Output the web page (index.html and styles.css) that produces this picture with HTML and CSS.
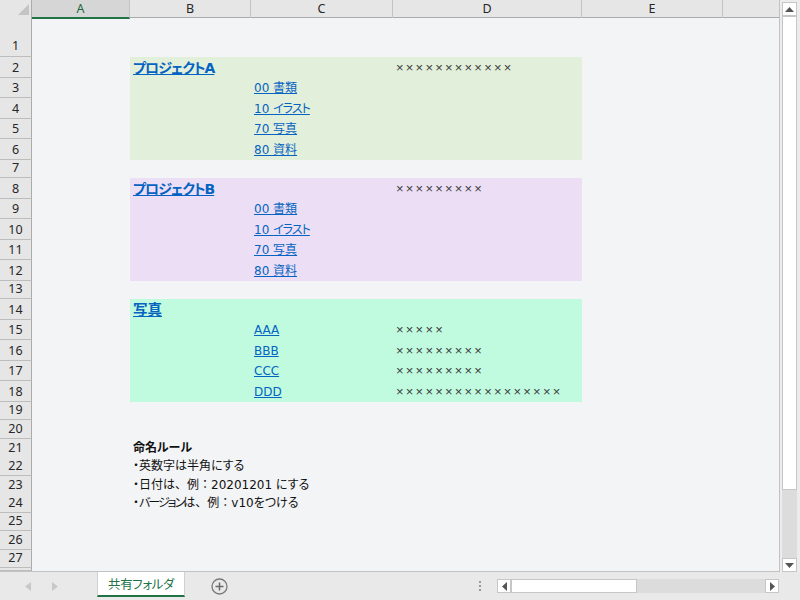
FILE: index.html
```html
<!DOCTYPE html>
<html lang="ja">
<head>
<meta charset="utf-8">
<link rel="stylesheet" href="styles.css">
</head>
<body>
<div class="app">
  <div class="main">
    <div class="sheet">
      <div class="row colhdr">
        <div class="corner"><svg width="32" height="18" viewBox="0 0 32 18"><polygon points="29,4 29,15 18,15" fill="#c4c4c4"/></svg></div>
        <div class="ch sel">A</div><div class="ch">B</div><div class="ch">C</div><div class="ch">D</div><div class="ch">E</div><div class="ch last"></div>
      </div>
      <div class="row r1"><div class="rh">1</div></div>

      <div class="row dr green"><div class="rh">2</div><div class="a"></div><div class="b"><a class="h kana">プロジェクトA</a></div><div class="c"></div><div class="d x">××××××××××××</div></div>
      <div class="row dr green"><div class="rh">3</div><div class="a"></div><div class="b"></div><div class="c"><a class="l">00 書類</a></div><div class="d"></div></div>
      <div class="row dr green"><div class="rh">4</div><div class="a"></div><div class="b"></div><div class="c"><a class="l">10 <span class="nk">イラスト</span></a></div><div class="d"></div></div>
      <div class="row dr green"><div class="rh">5</div><div class="a"></div><div class="b"></div><div class="c"><a class="l">70 写真</a></div><div class="d"></div></div>
      <div class="row dr green"><div class="rh">6</div><div class="a"></div><div class="b"></div><div class="c"><a class="l">80 資料</a></div><div class="d"></div></div>
      <div class="row sr"><div class="rh">7</div></div>

      <div class="row dr purple"><div class="rh">8</div><div class="a"></div><div class="b"><a class="h kana">プロジェクトB</a></div><div class="c"></div><div class="d x">×××××××××</div></div>
      <div class="row dr purple"><div class="rh">9</div><div class="a"></div><div class="b"></div><div class="c"><a class="l">00 書類</a></div><div class="d"></div></div>
      <div class="row dr purple"><div class="rh">10</div><div class="a"></div><div class="b"></div><div class="c"><a class="l">10 <span class="nk">イラスト</span></a></div><div class="d"></div></div>
      <div class="row dr purple"><div class="rh">11</div><div class="a"></div><div class="b"></div><div class="c"><a class="l">70 写真</a></div><div class="d"></div></div>
      <div class="row dr purple"><div class="rh">12</div><div class="a"></div><div class="b"></div><div class="c"><a class="l">80 資料</a></div><div class="d"></div></div>
      <div class="row sr"><div class="rh">13</div></div>

      <div class="row dr mint"><div class="rh">14</div><div class="a"></div><div class="b"><a class="h">写真</a></div><div class="c"></div><div class="d"></div></div>
      <div class="row dr mint"><div class="rh">15</div><div class="a"></div><div class="b"></div><div class="c"><a class="l">AAA</a></div><div class="d x">×××××</div></div>
      <div class="row dr mint"><div class="rh">16</div><div class="a"></div><div class="b"></div><div class="c"><a class="l">BBB</a></div><div class="d x">×××××××××</div></div>
      <div class="row dr mint"><div class="rh">17</div><div class="a"></div><div class="b"></div><div class="c"><a class="l">CCC</a></div><div class="d x">×××××××××</div></div>
      <div class="row dr mint"><div class="rh">18</div><div class="a"></div><div class="b"></div><div class="c"><a class="l">DDD</a></div><div class="d x">×××××××××××××××××</div></div>

      <div class="row sr"><div class="rh">19</div></div>
      <div class="row sr"><div class="rh">20</div></div>
      <div class="row sr"><div class="rh">21</div><div class="a"></div><div class="b bold">命名ルール</div></div>
      <div class="row sr"><div class="rh">22</div><div class="a"></div><div class="b">・英数字は半角にする</div></div>
      <div class="row sr"><div class="rh">23</div><div class="a"></div><div class="b">・日付は<span class="fw">、</span>例<span class="fw">：</span>20201201 にする</div></div>
      <div class="row sr"><div class="rh">24</div><div class="a"></div><div class="b">・<span class="nk2">バージョン</span>は<span class="fw">、</span>例<span class="fw">：</span>v10をつける</div></div>
      <div class="row sr"><div class="rh">25</div></div>
      <div class="row sr"><div class="rh">26</div></div>
      <div class="row sr"><div class="rh">27</div></div>
      <div class="row tail"><div class="rh"></div></div>
    </div>
    <div class="vscroll">
      <div class="sbtn"><svg width="9" height="5" viewBox="0 0 9 5"><polygon points="0,5 9,5 4.5,0" fill="#555"/></svg></div>
      <div class="vthumb"></div>
      <div class="vtrack"></div>
      <div class="sbtn"><svg width="9" height="5" viewBox="0 0 9 5"><polygon points="0,0 9,0 4.5,5" fill="#555"/></svg></div>
    </div>
  </div>
  <div class="tabbar">
    <div class="nav">
      <svg width="6" height="9" viewBox="0 0 6 9"><polygon points="6,0 6,9 0,4.5" fill="#c8c8c8"/></svg>
      <svg width="6" height="9" viewBox="0 0 6 9"><polygon points="0,0 0,9 6,4.5" fill="#c8c8c8"/></svg>
    </div>
    <div class="tab">共有フォルダ</div>
    <div class="add"><svg width="17" height="17" viewBox="0 0 17 17"><circle cx="8.5" cy="8.5" r="7.5" fill="none" stroke="#7a7a7a" stroke-width="1.3"/><path d="M8.5 4.5v8M4.5 8.5h8" stroke="#6a6a6a" stroke-width="1.5"/></svg></div>
    <div class="spacer"></div>
    <div class="dots"><span></span><span></span><span></span></div>
    <div class="hscroll">
      <div class="hbtn"><svg width="5" height="9" viewBox="0 0 5 9"><polygon points="5,0 5,9 0,4.5" fill="#555"/></svg></div>
      <div class="hthumb"></div>
      <div class="htrack"></div>
      <div class="hbtn"><svg width="5" height="9" viewBox="0 0 5 9"><polygon points="0,0 0,9 5,4.5" fill="#555"/></svg></div>
    </div>
  </div>
</div>
</body>
</html>
```

FILE: styles.css
```css
* { box-sizing: border-box; }
html, body { margin: 0; padding: 0; }
body {
  width: 800px; height: 600px; overflow: hidden;
  font-family: "DejaVu Sans", "Noto Sans CJK JP", sans-serif;
  font-feature-settings: "palt";
}
.app { width: 800px; height: 600px; display: flex; flex-direction: column; background: #ececec; }
.main { height: 572px; display: flex; }
.sheet {
  width: 780px; height: 572px; background: #f3f4f6;
  border-right: 1px solid #c2c2c2; border-bottom: 1px solid #c2c2c2;
  display: flex; flex-direction: column; overflow: hidden;
}
.row {
  display: grid;
  grid-template-columns: 32px 98px 121px 142px 189px 141px 1fr;
  flex: none;
}
.colhdr { height: 18px; background: #e6e6e6; border-bottom: 1px solid #ababab; }
.corner { background: #e6e6e6; border-right: 1px solid #ababab; }
.corner svg { display: block; }
.ch {
  font-family: "Noto Sans", sans-serif; font-size: 12.5px; color: #262626;
  display: flex; align-items: center; justify-content: center;
  border-right: 1px solid #c4c4c4; line-height: 16px;
  font-feature-settings: normal;
}
.ch.sel { background: #d6d6d6; color: #1d6b40; border-bottom: 2px solid #217346; margin-bottom: -1px; }
.ch.last { border-right: none; }
.r1 { height: 39px; }
.dr { height: 20.5px; }
.sr { height: 18.5px; }
.tail { flex: 1; }
.rh {
  background: #e6e6e6; border-right: 1px solid #ababab; border-bottom: 1px solid #bdbdbd;
  font-family: "Noto Sans", sans-serif; font-size: 12.5px; color: #262626;
  display: flex; align-items: flex-end; justify-content: center;
  line-height: 16px; padding-bottom: 1px;
  font-feature-settings: normal;
}
.r1 .rh { padding-bottom: 2px; }
.a, .b, .c, .d {
  display: flex; align-items: flex-end; padding: 0 3px 1px;
  white-space: nowrap; font-size: 12px; line-height: 18px; color: #111;
}
.fw { font-feature-settings: normal; }
.nk { letter-spacing: -1px; }
.nk2 { letter-spacing: -2px; }
.green .b, .green .c, .green .d { background: #e2efda; }
.purple .b, .purple .c, .purple .d { background: #ecdff5; }
.mint .b, .mint .c, .mint .d { background: #c0fbe0; }
.h { color: #0563c1; text-decoration: underline; font-weight: 700; font-size: 14.5px; }
.h.kana { font-size: 14px; letter-spacing: -1px; }
.l { color: #0563c1; text-decoration: underline; }
.x { font-family: "Liberation Sans", sans-serif; color: #3c3c3c; letter-spacing: 2.2px; font-size: 13px; font-feature-settings: normal; }
.bold { font-weight: 700; }

.vscroll { width: 20px; padding: 2px 3px 0 2px; display: flex; flex-direction: column; background: #ececec; }
.sbtn { height: 14px; background: #fff; border: 1px solid #c6c6c6; display: flex; align-items: center; justify-content: center; flex: none; }
.vthumb { height: 474px; background: #fff; border: 1px solid #c6c6c6; flex: none; }
.vtrack { flex: 1; background: #dcdcdc; }

.tabbar { height: 28px; display: flex; align-items: flex-start; background: #e9e9e9; padding-right: 21px; }
.nav { width: 97px; height: 28px; display: flex; align-items: center; gap: 21px; padding-left: 25px; }
.tab {
  width: 88px; height: 25px; background: #fff; color: #217346;
  border-left: 1px solid #d0d0d0; border-right: 1px solid #d0d0d0; border-bottom: 2px solid #217346;
  font-family: "Noto Sans CJK JP", sans-serif;
  font-size: 12.5px; letter-spacing: -0.4px; display: flex; align-items: center; justify-content: center;
}
.add { width: 50px; height: 28px; display: flex; align-items: center; justify-content: flex-end; padding-right: 7px; padding-top: 1px; }
.add svg { display: block; }
.spacer { flex: 1; }
.dots { width: 4px; height: 28px; display: flex; flex-direction: column; justify-content: center; gap: 2px; margin-right: 15px; align-items: center; }
.dots span { width: 2px; height: 2px; background: #9a9a9a; }
.hscroll { width: 282px; height: 14px; margin-top: 7px; display: flex; }
.hbtn { width: 14px; background: #fff; border: 1px solid #c6c6c6; display: flex; align-items: center; justify-content: center; flex: none; }
.hthumb { width: 126px; background: #fff; border: 1px solid #c6c6c6; flex: none; }
.htrack { flex: 1; background: #dcdcdc; }
```
